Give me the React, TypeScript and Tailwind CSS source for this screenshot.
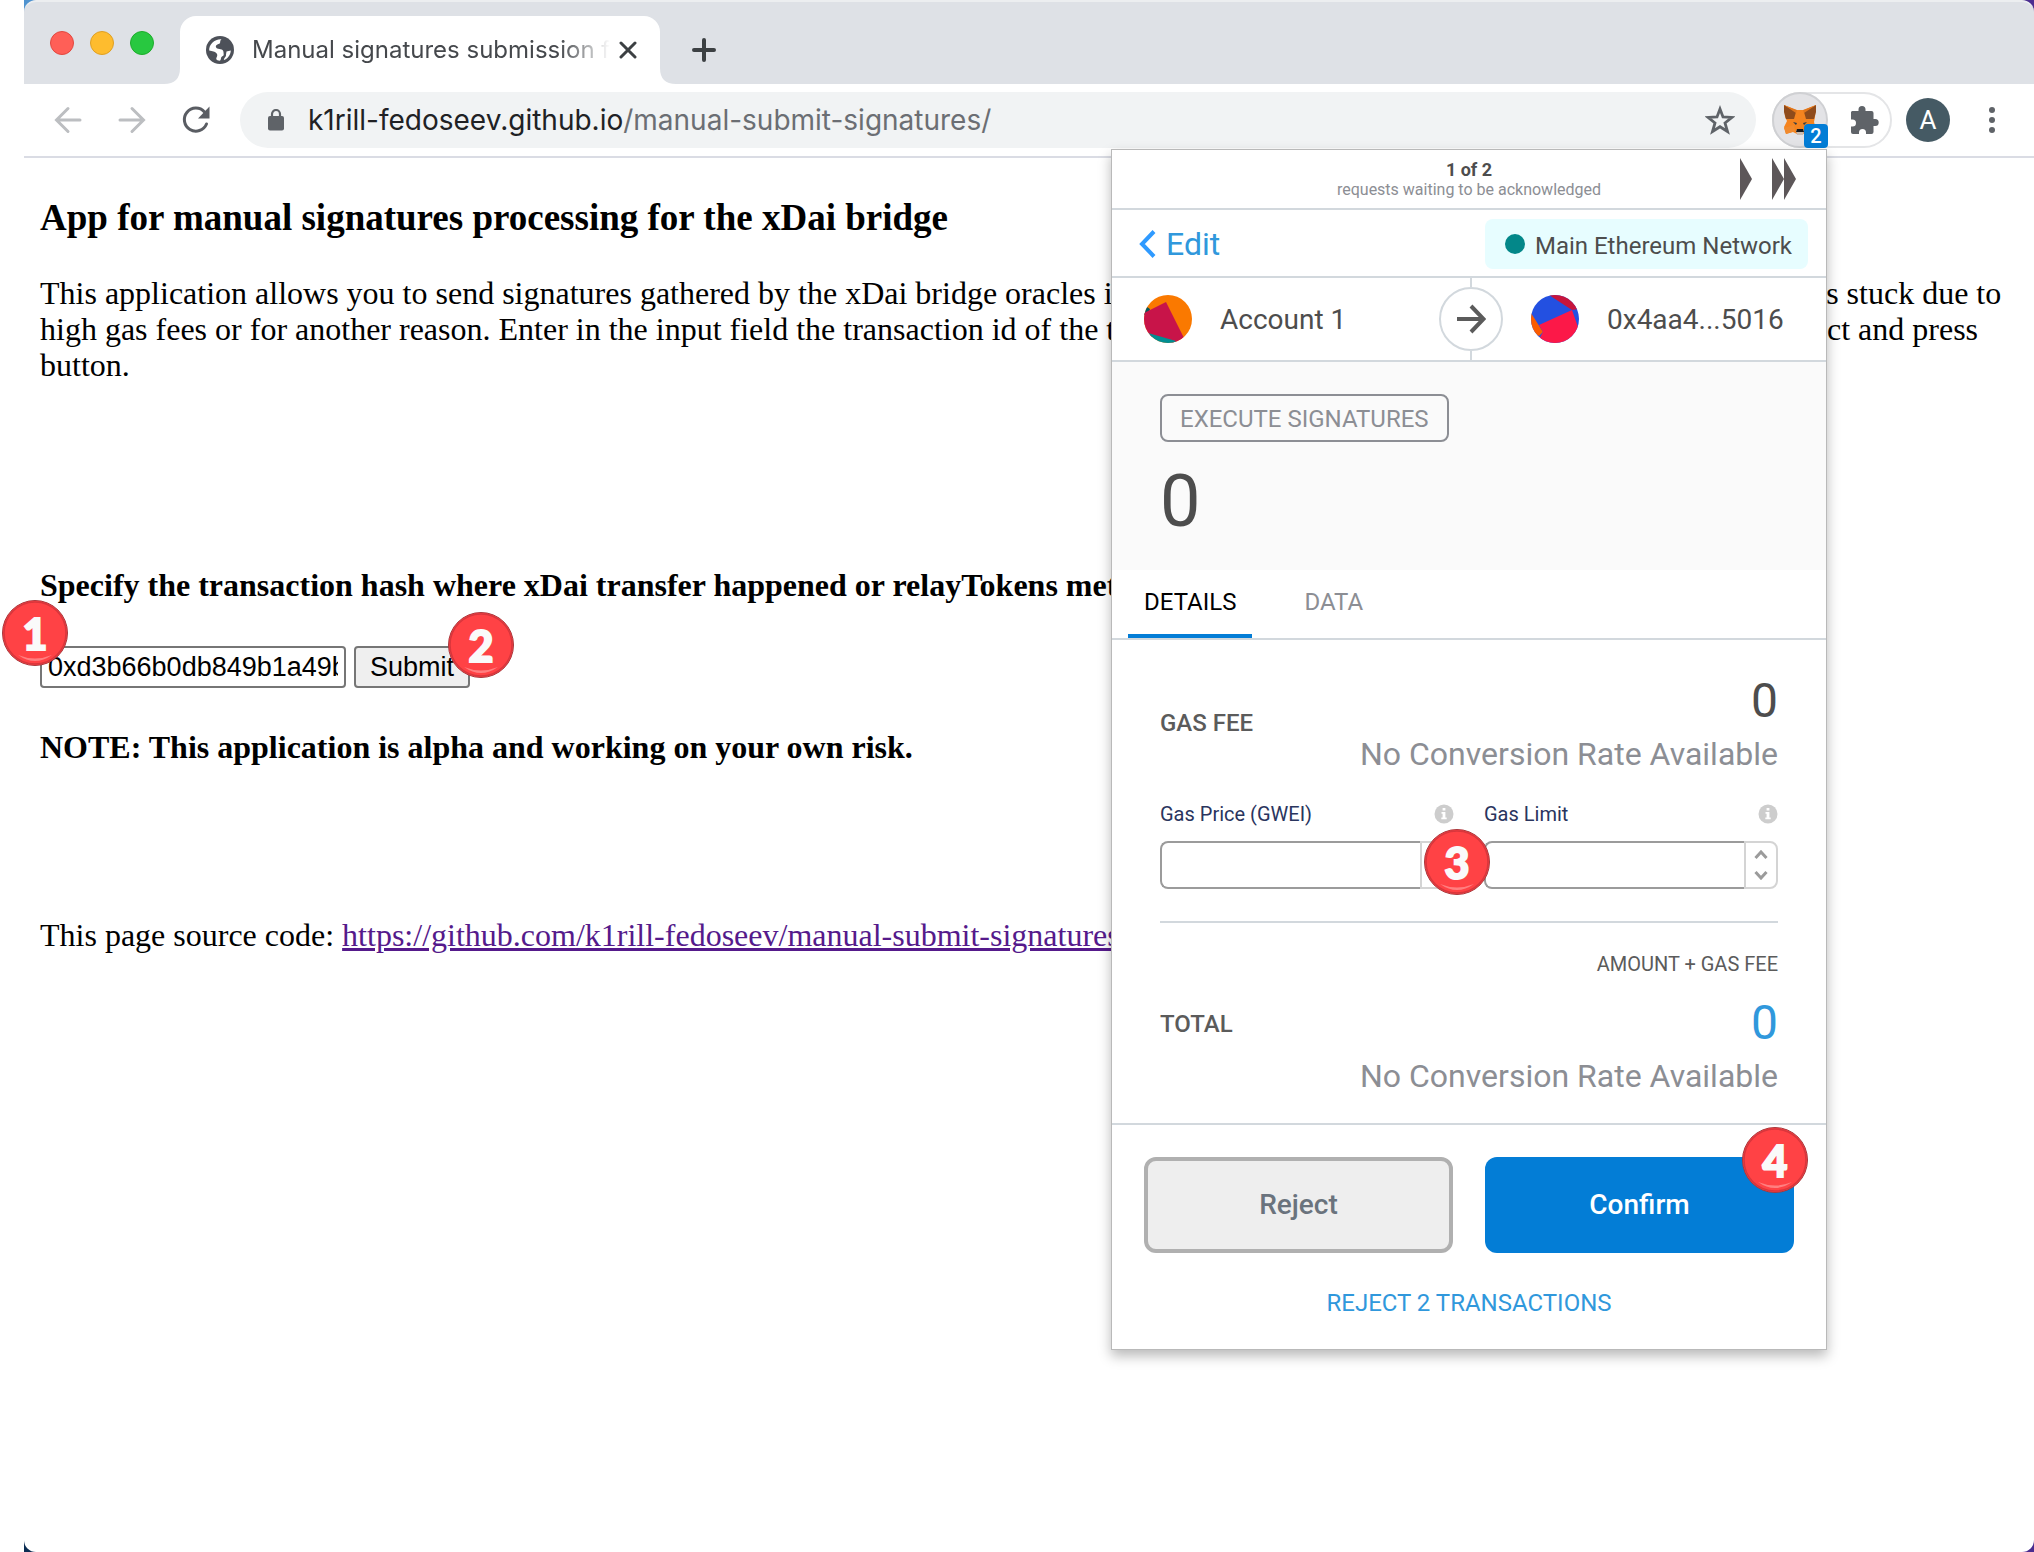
import type { ReactNode } from 'react'

function StepBadge({ n, className }: { n: number; className: string }) {
  return (
    <span
      className={`absolute z-20 flex size-[66px] items-center justify-center rounded-full border border-[#a8383c] bg-[#ff4245] font-['Lato',sans-serif] text-[43px] leading-none font-black text-[#fafafa] [-webkit-text-stroke:2px_#fafafa] ${className}`}
    >
      {n}
      <svg className="absolute inset-0" viewBox="0 0 64 64" fill="none" aria-hidden="true">
        <path d="M15 54 Q32 66 49 54 Q32 61 15 54Z" fill="#ff7f80" />
        <circle cx="32" cy="32" r="31" stroke="#d9363c" strokeWidth="1.5" />
      </svg>
    </span>
  )
}

function FoxIcon() {
  return (
    <svg width="34" height="32" viewBox="0 0 34 32" aria-hidden="true">
      <path d="M1 1 L13 6 H21 L33 1 L32 13 L31 18 L33 25 L25 28 L20 30 H14 L10 28 L3 30 L1 23 L4 17 L2 13Z" fill="#f5841f" />
      <path d="M1 1 L13 8 L11 15 L3 15 L1 8Z M33 1 L21 8 L23 15 L31 15 L33 8Z" fill="#8f4b1b" />
      <path d="M1 1 L14 6 L13 9Z M33 1 L20 6 L21 9Z" fill="#e2761b" />
      <path d="M1 24 L11 21 L12 27 L3 30Z" fill="#f08a2e" />
      <path d="M10 18 L14 19 L13 21Z M20 19 L24 18 L21 21Z" fill="#2b3a47" />
      <path d="M13 26 H21 L20 31 H14Z" fill="#c9bcb2" />
      <path d="M14 25 H20 L21 28 H13Z" fill="#17191c" />
    </svg>
  )
}

function TopBar() {
  return (
    <div className="bg-linear-to-r from-[#4f93cf] to-[#4a2c8f]">
      <div className="flex h-[84px] items-start rounded-t-xl border-t-2 border-[#eceef0] bg-[#dee1e6]">
        <div className="flex gap-4 pt-[29px] pl-[26px]">
          <button aria-label="Close window" className="size-6 rounded-full border border-[#e2483f] bg-[#ff5f57]" />
          <button aria-label="Minimize window" className="size-6 rounded-full border border-[#dfa023] bg-[#febc2e]" />
          <button aria-label="Zoom window" className="size-6 rounded-full border border-[#1dad2b] bg-[#28c840]" />
        </div>
        <div className="mt-[14px] flex h-[68px] items-end">
          <svg width="26" height="16" viewBox="0 0 26 16" aria-hidden="true">
            <path d="M10 16 Q26 16 26 0 V16Z" fill="#fff" />
          </svg>
          <div className="flex h-full w-[480px] items-center rounded-t-2xl bg-white pl-[26px]">
            <svg width="28" height="28" viewBox="0 0 28 28" aria-hidden="true">
              <circle cx="14" cy="14" r="14" fill="#4d5159" />
              <path
                d="M15.500 3.200 C13 5.500 15.500 7 12.500 8 C10.500 8.800 9 10 10.500 12 C12 13.300 17.500 12.500 17.500 16 C17.500 18 18.500 19.500 16 20.500 C14.500 21.500 15.500 23 14 24.800 C9.500 24.500 10 22.500 10.800 21 C12.500 18 10 15.300 3.200 14.500 C2.800 8.500 8.500 2.800 15.500 3.200Z"
                fill="#fff"
              />
              <path d="M20.500 15.500 L24.800 14.500 C24.600 19 21.500 22.800 18 24 C17.500 22 20.500 21 20 18.500Z" fill="#fff" />
            </svg>
            <span className="ml-[18px] w-[358px] overflow-hidden mask-r-from-86% font-['Inter',sans-serif] text-[24px] whitespace-nowrap text-[#45484c]">
              Manual signatures submission for the bridge
            </span>
            <button aria-label="Close tab" className="ml-[9px]">
              <svg width="18" height="18" viewBox="0 0 18 18" fill="none" stroke="#3c4043" strokeWidth="3" strokeLinecap="round" aria-hidden="true">
                <path d="M2 2 L16 16 M16 2 L2 16" />
              </svg>
            </button>
          </div>
          <svg width="16" height="16" viewBox="0 0 16 16" aria-hidden="true">
            <path d="M16 16 Q0 16 0 0 V16Z" fill="#fff" />
          </svg>
          <button aria-label="New tab" className="mb-[22px] ml-4">
            <svg width="24" height="24" viewBox="0 0 24 24" fill="none" stroke="#3c4043" strokeWidth="4" strokeLinecap="round" aria-hidden="true">
              <path d="M12 2 V22 M2 12 H22" />
            </svg>
          </button>
        </div>
      </div>
    </div>
  )
}

function Toolbar() {
  return (
    <div className="flex h-[74px] items-center border-b-2 border-[#dadce4] pl-[30px]">
      <button aria-label="Back">
        <svg width="28" height="28" viewBox="0 0 28 28" fill="none" stroke="#bcbec1" strokeWidth="3" strokeLinecap="round" aria-hidden="true">
          <path d="M26 14 H3 M14 2.500 L2.500 14 L14 25.500" />
        </svg>
      </button>
      <button aria-label="Forward" className="ml-9">
        <svg width="28" height="28" viewBox="0 0 28 28" fill="none" stroke="#bcbec1" strokeWidth="3" strokeLinecap="round" aria-hidden="true">
          <path d="M2 14 H25 M14 2.500 L25.500 14 L14 25.500" />
        </svg>
      </button>
      <button aria-label="Reload" className="ml-9">
        <svg width="28" height="28" viewBox="0 0 28 28" fill="none" aria-hidden="true">
          <path d="M24.500 18 A11.500 11.500 0 1 1 22.500 6" stroke="#5a5d63" strokeWidth="3" strokeLinecap="round" />
          <path d="M27.500 0.500 V12.500 H16Z" fill="#5a5d63" />
        </svg>
      </button>
      <div className="ml-[30px] flex h-14 flex-1 items-center rounded-full bg-[#f1f3f4] pr-[21px] pl-7">
        <svg width="16" height="22" viewBox="0 0 16 22" fill="none" aria-hidden="true">
          <rect y="7" width="16" height="14.500" rx="2" fill="#5f6368" />
          <path d="M4 8 V5 A4 4 0 0 1 12 5 V8" stroke="#5f6368" strokeWidth="2.200" />
        </svg>
        <span className="ml-6 flex-1 font-['Inter',sans-serif] text-[28px] text-[#202124]">
          k1rill-fedoseev.github.io<span className="text-[#6b6e73]">/manual-submit-signatures/</span>
        </span>
        <button aria-label="Bookmark this page">
          <svg width="30" height="30" viewBox="0 0 30 30" fill="none" stroke="#5f6368" strokeWidth="2.800" aria-hidden="true">
            <path d="M15 4 L18 12 L27 12.400 L20 18 L22.500 26.500 L15 21.700 L7.500 26.500 L10 18 L3 12.400 L12 12Z" />
          </svg>
        </button>
      </div>
      <div className="ml-4 flex h-14 w-[120px] items-center rounded-full border-2 border-[#e4e5e7]">
        <button aria-label="MetaMask" className="relative -ml-0.5 flex size-14 items-center justify-center rounded-full border-2 border-[#cfd0d3] bg-[#e3e3e6]">
          <FoxIcon />
          <span className="absolute -right-0.5 -bottom-0.5 flex size-6 items-center justify-center rounded-sm bg-[#037dd6] font-['Roboto',sans-serif] text-[20px] leading-none font-medium text-white">
            2
          </span>
        </button>
        <button aria-label="Extensions" className="ml-[22px]">
          <svg width="29" height="29" viewBox="0 0 29 29" aria-hidden="true">
            <path
              d="M2 5 H8.500 V3.500 A3.500 3.500 0 0 1 15.500 3.500 V5 H21.500 A2 2 0 0 1 23.500 7 V13 H25.200 A3.400 3.400 0 0 1 25.200 20 H23.500 V26 A2 2 0 0 1 21.500 28 H16 V26.500 A3.500 3.500 0 0 0 9 26.500 V28 H3 A2 2 0 0 1 1 26 V20.500 H2.500 A3.500 3.500 0 0 0 2.500 13.500 H1 V6Z"
              fill="#5f6368"
            />
          </svg>
        </button>
      </div>
      <button className="ml-[14px] flex size-11 items-center justify-center rounded-full bg-[#455a64] font-['Roboto',sans-serif] text-[26px] text-white">
        A
      </button>
      <button aria-label="Menu" className="mr-[39px] ml-[39px] flex flex-col gap-1">
        <span className="size-1.5 rounded-full bg-[#5f6368]" />
        <span className="size-1.5 rounded-full bg-[#5f6368]" />
        <span className="size-1.5 rounded-full bg-[#5f6368]" />
      </button>
    </div>
  )
}

function PageContent() {
  return (
    <main className="px-4 pt-[38px] font-['Liberation_Serif',serif] text-[32px] leading-9 text-black">
      <h3 className="text-[37px] leading-[44px] font-bold">App for manual signatures processing for the xDai bridge</h3>
      <p className="mt-[35px]">
        This application allows you to send signatures gathered by the xDai bridge oracles in the Ethereum mainnet in
        cases where the transaction is stuck due to high gas fees or for another reason. Enter in the input field the
        transaction id of the transaction that was lately sent to the xDai bridge contract and press button.
      </p>
      <h4 className="mt-[184px] font-bold">
        <label htmlFor="tx-hash">Specify the transaction hash where xDai transfer happened or relayTokens method was called:</label>
      </h4>
      <form className="mt-[43px] flex gap-2 font-['Liberation_Sans',sans-serif] text-[27px] leading-8" onSubmit={(e) => e.preventDefault()}>
        <div className="relative">
          <input
            id="tx-hash"
            type="text"
            defaultValue="0xd3b66b0db849b1a49b7a6c"
            className="block h-[42px] w-[306px] rounded border-2 border-[#767676] bg-white px-1.5"
          />
          <StepBadge n={1} className="-top-[46px] -left-[38px]" />
        </div>
        <div className="relative">
          <button type="submit" className="block h-[42px] w-[116px] rounded border-2 border-[#767676] bg-[#efefef]">
            Submit
          </button>
          <StepBadge n={2} className="-top-[34px] -right-[44px]" />
        </div>
      </form>
      <h4 className="mt-[41px] font-bold">NOTE: This application is alpha and working on your own risk.</h4>
      <p className="mt-[152px]">
        This page source code:{' '}
        <a href="https://github.com/k1rill-fedoseev/manual-submit-signatures" className="text-[#551a8b] underline">
          https://github.com/k1rill-fedoseev/manual-submit-signatures
        </a>
      </p>
    </main>
  )
}

function InfoIcon() {
  return (
    <svg width="20" height="20" viewBox="0 0 20 20" aria-hidden="true">
      <circle cx="10" cy="10" r="9.500" fill="#cdcdcd" />
      <path d="M8.600 4 H11.400 V6.600 H8.600Z M7.500 8 H11.400 V13.500 H12.700 V15.300 H7.300 V13.500 H8.600 V9.800 H7.500Z" fill="#fff" />
    </svg>
  )
}

function GasField({ id, label, children }: { id: string; label: string; children?: ReactNode }) {
  return (
    <div>
      <div className="flex items-center justify-between text-[20px] leading-6 text-[#2a355e]">
        <label htmlFor={id}>{label}</label>
        <InfoIcon />
      </div>
      <div className="relative mt-[15px] flex h-12">
        <input id={id} type="text" className="min-w-0 flex-1 rounded-l-lg border-2 border-r-0 border-[#9b9b9b] bg-white px-4" />
        <div className="flex w-[34px] flex-col items-center justify-center gap-3 rounded-r-lg border-2 border-[#d4d4d4]">
          <button type="button" aria-label={`Increase ${label}`}>
            <svg width="14" height="9" viewBox="0 0 14 9" fill="none" stroke="#9b9b9b" strokeWidth="3" aria-hidden="true">
              <path d="M1.500 8 L7 2 L12.500 8" />
            </svg>
          </button>
          <button type="button" aria-label={`Decrease ${label}`}>
            <svg width="14" height="9" viewBox="0 0 14 9" fill="none" stroke="#9b9b9b" strokeWidth="3" aria-hidden="true">
              <path d="M1.500 1 L7 7 L12.500 1" />
            </svg>
          </button>
        </div>
        {children}
      </div>
    </div>
  )
}

function Amount({ className }: { className: string }) {
  return (
    <>
      <div className={`text-[48px] leading-[56px] ${className}`}>0</div>
      <div className="mt-1.5 text-[32px] leading-[38px] text-[#8c8e94]">No Conversion Rate Available</div>
    </>
  )
}

function WalletPopup() {
  return (
    <section className="absolute top-[149px] right-[207px] z-10 w-[716px] border border-[#b9b9b9] bg-white font-['Roboto',sans-serif] text-[#4d4d4d] shadow-[0_6px_12px_rgba(0,0,0,0.28)]">
      <header className="relative h-[60px] border-b-2 border-[#d2d8dd] pt-[10px] text-center leading-5">
        <div className="text-[18px] font-bold">1 of 2</div>
        <div className="text-[16px] text-[#8c8e94]">requests waiting to be acknowledged</div>
        <div className="absolute inset-y-0 right-[30px] flex items-center gap-5">
          <button aria-label="Next request">
            <svg width="12" height="42" viewBox="0 0 12 42" fill="#5d5759" aria-hidden="true">
              <path d="M0 0 L12 21 L0 42Z" />
            </svg>
          </button>
          <button aria-label="Last request">
            <svg width="24" height="42" viewBox="0 0 24 42" fill="#5d5759" aria-hidden="true">
              <path d="M0 0 L12 21 L0 42Z M12 0 L24 21 L12 42Z" />
            </svg>
          </button>
        </div>
      </header>

      <div className="flex h-[68px] items-center justify-between border-b-2 border-[#d2d8dd] pt-2 pr-[18px] pb-[6px] pl-[27px]">
        <button className="flex items-center gap-[10px] text-[32px] leading-[38px] text-[#3098dc]">
          <svg width="17" height="28" viewBox="0 0 17 28" fill="none" stroke="#2f9aff" strokeWidth="4" aria-hidden="true">
            <path d="M15 1.500 L3 14 L15 26.500" />
          </svg>
          Edit
        </button>
        <div className="flex h-[50px] items-center gap-[10px] rounded-lg bg-[#e7fdff] pr-4 pl-5 text-[24px]">
          <span className="size-5 rounded-full bg-[#038789]" />
          <span className="pt-1">Main Ethereum Network</span>
        </div>
      </div>

      <div className="relative flex h-[84px] items-center border-b-2 border-[#d2d8dd] text-[28px]">
        <div className="flex flex-1 items-center gap-7 pl-8">
          <svg width="48" height="48" viewBox="0 0 48 48" aria-hidden="true">
            <clipPath id="avatar-from">
              <circle cx="24" cy="24" r="24" />
            </clipPath>
            <g clipPath="url(#avatar-from)">
              <rect width="48" height="48" fill="#fa7900" />
              <path d="M0 10 L6 14 L4 20 L0 20Z" fill="#03595e" />
              <path d="M0 18 L22 7 L40 43 L30 48 L0 40Z" fill="#c81449" />
              <path d="M4 38 L32 46 L30 48 H4Z" fill="#018e92" />
            </g>
          </svg>
          <span className="pt-0.5">Account 1</span>
        </div>
        <div className="flex h-full flex-col items-center">
          <span className="w-0.5 flex-1 bg-[#d2d8dd]" />
          <span className="flex size-16 items-center justify-center rounded-full border-2 border-[#d2d8dd]">
            <svg width="30" height="30" viewBox="0 0 30 30" fill="none" stroke="#5b5b5b" strokeWidth="4" aria-hidden="true">
              <path d="M1 15 H27 M15 2 L27.500 15 L15 28" />
            </svg>
          </span>
          <span className="w-0.5 flex-1 bg-[#d2d8dd]" />
        </div>
        <div className="flex flex-1 items-center gap-7 pl-7">
          <svg width="48" height="48" viewBox="0 0 48 48" aria-hidden="true">
            <clipPath id="avatar-to">
              <circle cx="24" cy="24" r="24" />
            </clipPath>
            <g clipPath="url(#avatar-to)">
              <rect width="48" height="48" fill="#2350e1" />
              <path d="M18 0 L41 15 L48 14 V0Z" fill="#c7143c" />
              <path d="M0 18 L12 37 L8 41 L0 36Z" fill="#fb5c00" />
              <path d="M8 30 L41 15 L47 32 L40 48 H6 L12 37Z" fill="#fc1848" />
            </g>
          </svg>
          <span className="pt-0.5">0x4aa4...5016</span>
        </div>
      </div>

      <div className="bg-[#fafafa] px-12 pt-8 pb-[26px]">
        <div className="flex h-12 w-fit items-center rounded-lg border-2 border-[#8c8e94] px-[18px] pt-0.5 text-[24px] text-[#8c8e94]">
          EXECUTE SIGNATURES
        </div>
        <div className="mt-[18px] text-[72px] leading-[84px]">0</div>
      </div>

      <div role="tablist" className="flex h-[70px] gap-9 border-b-2 border-[#d2d8dd] px-4 text-[24px]">
        <button role="tab" aria-selected="true" className="border-b-4 border-[#037dd6] px-4 text-black">
          DETAILS
        </button>
        <button role="tab" aria-selected="false" className="border-b-4 border-transparent px-4 text-[#8c8e94]">
          DATA
        </button>
      </div>

      <div className="border-b-2 border-[#d2d8dd] px-12 pt-[33px] pb-7">
        <div className="flex items-center justify-between">
          <span className="text-[24px] font-medium text-[#5b5b5b]">GAS FEE</span>
          <div className="text-right">
            <Amount className="text-[#4d4d4d]" />
          </div>
        </div>
        <div className="mt-[29px] grid grid-cols-2 gap-[30px]">
          <GasField id="gas-price" label="Gas Price (GWEI)">
            <StepBadge n={3} className="-top-3 -right-9" />
          </GasField>
          <GasField id="gas-limit" label="Gas Limit" />
        </div>
        <hr className="mt-8 border-t-2 border-[#d2d8dd]" />
        <div className="mt-[29px] flex items-center justify-between">
          <span className="text-[24px] font-medium text-[#5b5b5b]">TOTAL</span>
          <div className="text-right">
            <div className="mb-[19px] text-[20px] leading-6 text-[#5b5b5b]">AMOUNT + GAS FEE</div>
            <Amount className="text-[#3098dc]" />
          </div>
        </div>
      </div>

      <footer className="px-8 pt-8 pb-8">
        <div className="grid grid-cols-2 gap-8 text-[28px] font-medium">
          <button className="h-24 rounded-xl border-4 border-[#b0b0b0] bg-[#eeeeee] text-[#6a737d]">Reject</button>
          <div className="relative">
            <button className="h-24 w-full rounded-xl bg-[#037dd6] text-white">Confirm</button>
            <StepBadge n={4} className="-top-[30px] -right-[14px]" />
          </div>
        </div>
        <button className="mx-auto mt-9 block text-[24px] leading-7 text-[#3098dc]">REJECT 2 TRANSACTIONS</button>
      </footer>
    </section>
  )
}

export default function App() {
  return (
    <div className="min-h-screen bg-white pl-6">
      <div className="relative flex min-h-screen flex-col bg-linear-to-r from-[#0b2c52] to-[#4a2c8f]">
        <TopBar />
        <div className="flex-1 rounded-b-xl bg-white">
          <Toolbar />
          <PageContent />
        </div>
        <WalletPopup />
      </div>
    </div>
  )
}
